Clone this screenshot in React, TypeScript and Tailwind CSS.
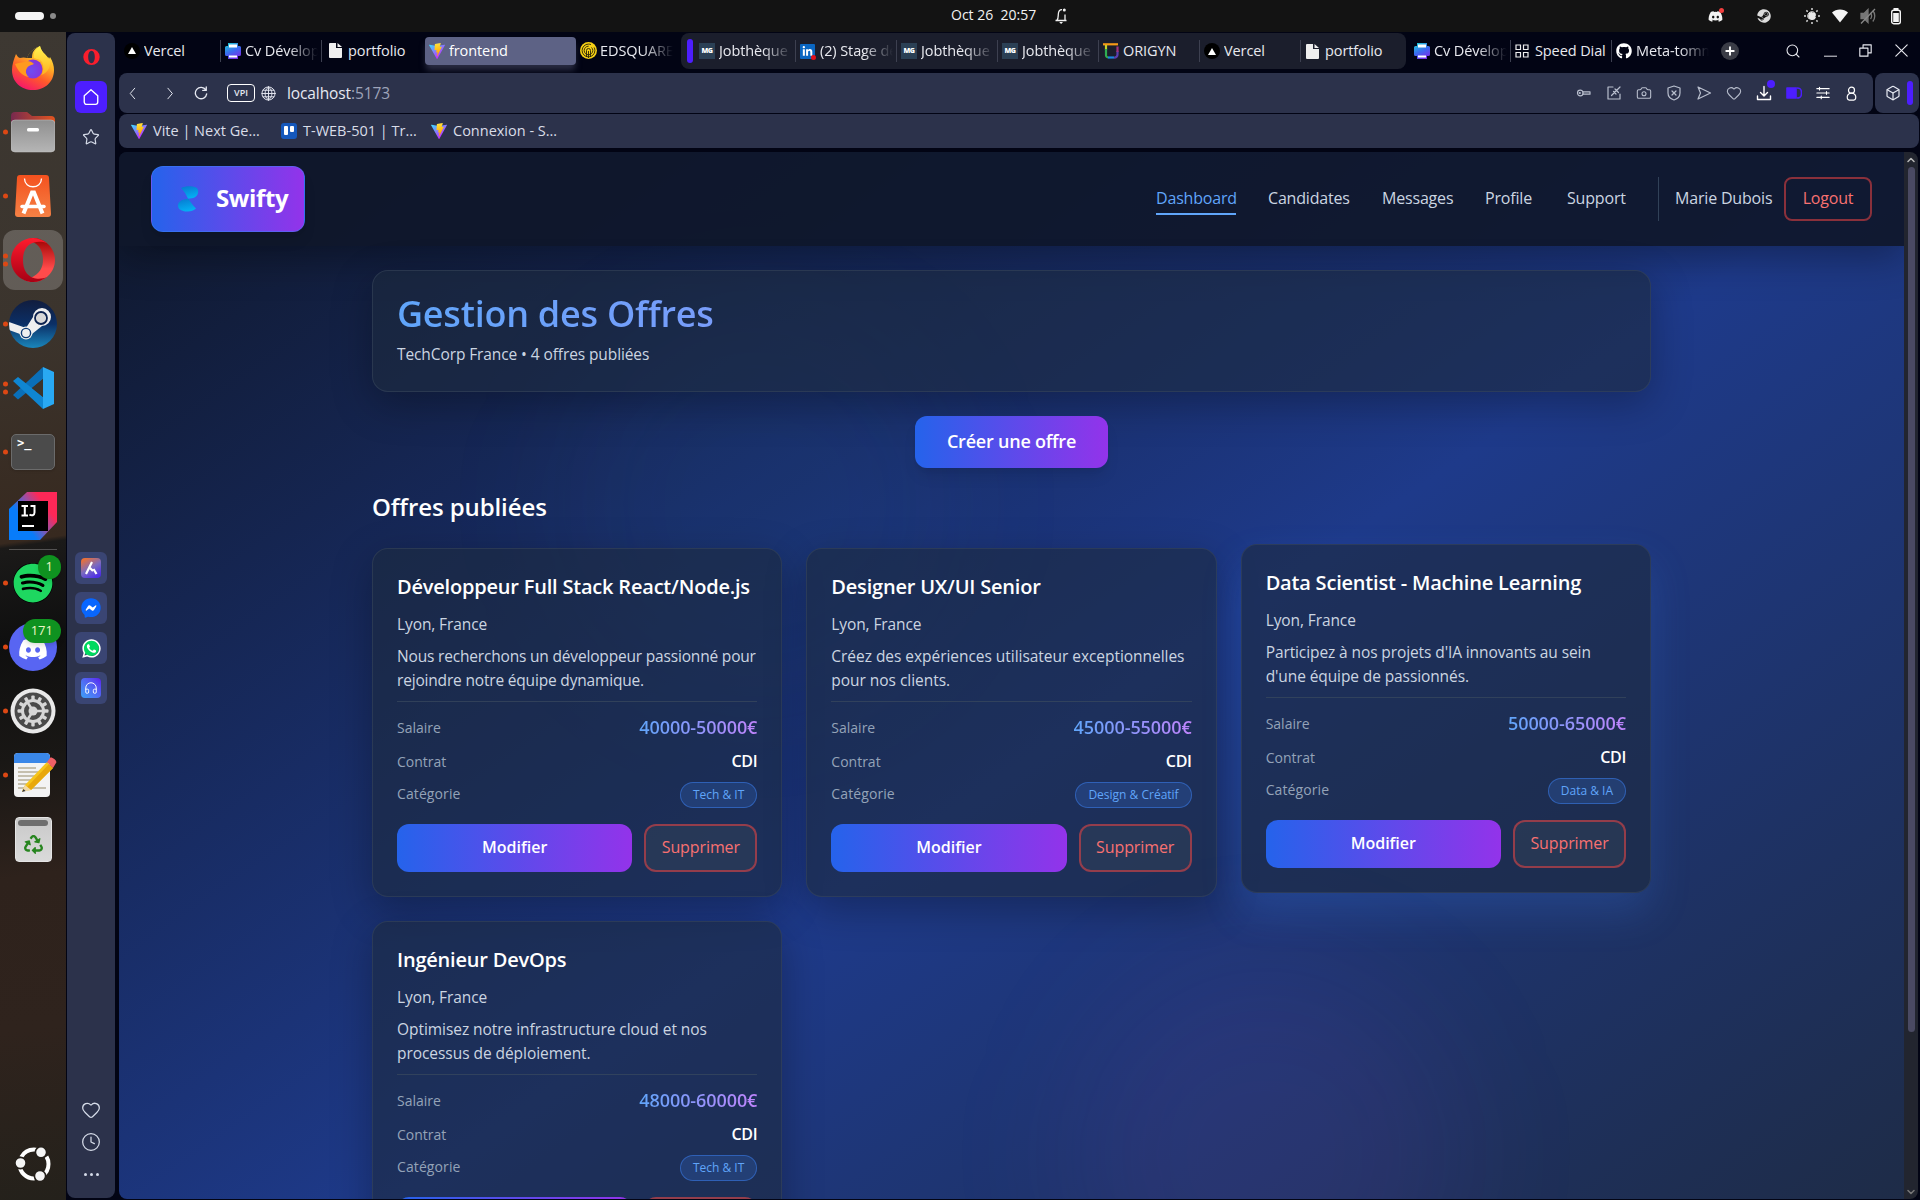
import React from 'react';
import { FaDiscord, FaFacebookMessenger, FaGithub, FaLinkedinIn, FaRecycle, FaSpotify, FaSteam, FaWhatsapp } from 'react-icons/fa';
import { Box, Camera, Clock, Headphones, Heart, Search, Star } from 'lucide-react';

/* ---------- shared glyphs ---------- */

function ViteLogo({ id, className }: { id: string; className?: string }) {
  return (
    <svg viewBox="0 0 256 257" className={className}>
      <defs>
        <linearGradient id={id + 'a'} x1="0" y1="0.1" x2="0.6" y2="0.85">
          <stop offset="0" stopColor="#41d1ff" />
          <stop offset="1" stopColor="#bd34fe" />
        </linearGradient>
        <linearGradient id={id + 'b'} x1="0.4" y1="0" x2="0.5" y2="0.8">
          <stop offset="0" stopColor="#ffea83" />
          <stop offset="0.1" stopColor="#ffdd35" />
          <stop offset="1" stopColor="#ffa800" />
        </linearGradient>
      </defs>
      <path fill={`url(#${id}a)`} d="M255.153 37.938L134.897 252.976c-2.483 4.44-8.862 4.466-11.382.048L.875 37.958c-2.746-4.814 1.371-10.646 6.827-9.67l120.385 21.517a6.537 6.537 0 0 0 2.322-.004l117.867-21.483c5.438-.991 9.574 4.796 6.877 9.62Z" />
      <path fill={`url(#${id}b)`} d="M185.432.063L96.44 17.501a3.268 3.268 0 0 0-2.634 3.014l-5.474 92.456a3.268 3.268 0 0 0 3.997 3.378l24.777-5.718c2.318-.535 4.413 1.507 3.936 3.838l-7.361 36.047c-.495 2.426 1.782 4.5 4.151 3.78l15.304-4.649c2.372-.72 4.652 1.36 4.15 3.788l-11.698 56.621c-.732 3.542 3.979 5.473 5.943 2.437l1.313-2.028l72.516-144.72c1.215-2.423-.88-5.186-3.54-4.672l-25.505 4.922c-2.396.462-4.435-1.77-3.759-4.114l16.646-57.705c.677-2.35-1.37-4.583-3.769-4.113Z" />
    </svg>
  );
}

function Stroke({ size = 16, w = 1.2, children }: { size?: number; w?: number; children: React.ReactNode }) {
  return (
    <svg width={size} height={size} viewBox="0 0 16 16" fill="none" stroke="currentColor" strokeWidth={w} strokeLinejoin="round" strokeLinecap="round" className="shrink-0">
      {children}
    </svg>
  );
}

/* ---------- system bar ---------- */

function SystemBar() {
  return (
    <div className="grid h-8 shrink-0 grid-cols-[951px_1fr_auto] items-center bg-[#131313] text-[#f2f2f2]">
      <div className="flex items-center gap-[6px] pl-[15px]">
        <span className="h-2 w-[29px] rounded-full bg-[#f5f5f5]" />
        <span className="size-[6px] rounded-full bg-[#8a8a8a]" />
      </div>
      <div className="flex items-center">
        <span className="w-[103px] pb-[2px] text-[14px] leading-5 whitespace-pre">Oct 26  20:57</span>
        <svg width="14" height="18" viewBox="0 0 14 18" fill="none" stroke="currentColor" strokeWidth="1.300">
          <path d="M1.500 13.500h11M3 13.300c1.300-1.500 1.200-3.500 1.300-6C4.400 4.500 5.500 2.700 8 2.700M11 13.300V7.500" />
          <circle cx="10.300" cy="3" r="1.500" fill="currentColor" stroke="none" />
          <path d="M5.200 15h3.800L7.100 17z" fill="currentColor" stroke="none" />
        </svg>
      </div>
      <div className="flex items-center pr-[18px]">
        <div className="relative mr-[34px]">
          <FaDiscord size={15} />
          <span className="absolute -top-[1px] -right-[1px] size-[5px] rounded-full bg-[#f23f3f]" />
        </div>
        <FaSteam size={14} className="mr-[33px] text-[#dcdcdc]" />
        <svg width="16" height="16" viewBox="0 0 16 16" className="mr-3">
          <g stroke="#d8d8d8" strokeWidth="1.500">
            <path d="M8 0v2M8 14v2M0 8h2M14 8h2M2.400 2.400l1.300 1.300M12.300 12.300l1.300 1.300M2.400 13.600l1.300-1.300M12.300 3.700l1.300-1.300" />
          </g>
          <circle cx="8" cy="8" r="4.300" fill="none" stroke="#d8d8d8" />
          <path d="M9.500 4.200A4 4 0 0 1 6.500 10.500 4.500 4.500 0 0 1 4.500 10 4.600 4.600 0 1 0 9.500 4.200z" fill="#131313" />
          <path d="M8 4a4 4 0 1 0 4 5A4.500 4.500 0 0 1 8 4z" fill="#e8e8e8" />
          <circle cx="9.300" cy="6.800" r="2.600" fill="#e8e8e8" />
        </svg>
        <svg width="16" height="14" viewBox="0 0 16 14" className="mr-3">
          <path d="M0 3.500C4-.500 12-.500 16 3.500L8 13.500z" fill="#f5f5f5" />
        </svg>
        <svg width="16" height="16" viewBox="0 0 16 16" className="mr-[14px]" stroke="#777" fill="none" strokeWidth="1.300">
          <path d="M1 5.500h3l4-4v13l-4-4H1z" fill="#777" />
          <path d="M10.500 5c1.300 1.700 1.300 4.300 0 6M12.800 2.500c2.600 3 2.600 8 0 11" />
          <path d="M15 1L1 15.500" stroke="#8a8a8a" />
        </svg>
        <svg width="12" height="17" viewBox="0 0 12 17">
          <rect x="3.500" y="0" width="5" height="2" fill="#f5f5f5" />
          <rect x="1.700" y="2.200" width="8.600" height="13.500" rx="2" fill="none" stroke="#f5f5f5" strokeWidth="1.400" />
          <rect x="3.200" y="5" width="5.600" height="9" fill="#f5f5f5" />
        </svg>
      </div>
    </div>
  );
}

/* ---------- dock ---------- */

function DockItem({ dots = 0, active, badge, children }: { dots?: number; active?: boolean; badge?: string; children: React.ReactNode }) {
  return (
    <div className="relative flex h-16 w-[66px] items-center justify-center">
      {active && <span className="absolute inset-x-[3px] inset-y-[2px] rounded-xl bg-white/20" />}
      <div className="absolute top-1/2 left-[3px] flex -translate-y-1/2 flex-col gap-[3px]">
        {dots > 0 && <span className="size-[5px] rounded-full bg-[#dd4814]" />}
        {dots > 1 && <span className="size-[5px] rounded-full bg-[#dd4814]" />}
      </div>
      <div className="relative">{children}</div>
      {badge && (
        <span className="absolute top-[4px] right-[5px] flex h-6 items-center rounded-full bg-[#0f9220] px-[8px] text-[13px] text-[#eef6c8] shadow-md">{badge}</span>
      )}
    </div>
  );
}

function Firefox() {
  return (
    <svg width="44" height="46" viewBox="0 0 44 46">
      <defs>
        <linearGradient id="ff1" x1="0.8" y1="0" x2="0.3" y2="1">
          <stop offset="0" stopColor="#fff44f" />
          <stop offset="0.35" stopColor="#ffb325" />
          <stop offset="0.65" stopColor="#ff5a2a" />
          <stop offset="1" stopColor="#f5156c" />
        </linearGradient>
        <radialGradient id="ff2" cx="0.4" cy="0.6" r="0.7">
          <stop offset="0" stopColor="#6f4df0" />
          <stop offset="1" stopColor="#8a2fd8" />
        </radialGradient>
        <linearGradient id="ff3" x1="0.5" y1="0" x2="0.5" y2="1">
          <stop offset="0" stopColor="#fff44f" />
          <stop offset="1" stopColor="#ffb01f" />
        </linearGradient>
      </defs>
      <path fill="url(#ff1)" d="M5 9c1 1.500 2 3.500 4 4 3-1 5-.600 7 0C19 5 25 3 29 1c1 6 6 8 9 13 1-1 1-2 1-2 3 5 4 9 4 13C43 37 34 45 22 45S1 37 1 25c0-6 2-11 4-16z" />
      <path fill="#3c3731" d="M16 13c2-6 6-9 13-12-6 3-8 6-8 12z" />
      <path fill="url(#ff3)" d="M29 1c-4 3-7 7-6 12 3 1 6 1 8 4 2 4 2 9-1 13 8-2 11-11 8-18-1 1-1 2-1 2C35 9 30 7 29 1z" />
      <circle cx="22" cy="24" r="9.500" fill="url(#ff2)" />
      <path fill="#ff9a1f" d="M4 19c5-2 9-1 12-3 3 0 5 1 7 3-2 1-5 1-7 4-2 3-1 7 2 9-7-1-11-6-14-13z" />
    </svg>
  );
}

function Files() {
  return (
    <svg width="44" height="42" viewBox="0 0 44 42">
      <defs>
        <linearGradient id="fi1" x1="0" x2="1"><stop offset="0" stopColor="#77294f" /><stop offset="1" stopColor="#e2541f" /></linearGradient>
        <linearGradient id="fi2" x1="0" y1="0" x2="0" y2="1"><stop offset="0" stopColor="#8f8f8f" /><stop offset="1" stopColor="#b5b5b5" /></linearGradient>
      </defs>
      <path d="M0 5a4 4 0 0 1 4-4h12l5 4h19a4 4 0 0 1 4 4v14H0z" fill="url(#fi1)" />
      <rect y="9" width="44" height="32" rx="4" fill="url(#fi2)" stroke="#c6c6c6" strokeWidth="0.500" />
      <rect x="16" y="17" width="12" height="3.500" rx="1.500" fill="#fff" />
    </svg>
  );
}

function AppCenter() {
  return (
    <svg width="36" height="42" viewBox="0 0 36 42">
      <defs><linearGradient id="ac" x1="0" y1="0" x2="0" y2="1"><stop offset="0" stopColor="#f4511e" /><stop offset="1" stopColor="#f58145" /></linearGradient></defs>
      <path d="M2 3a3 3 0 0 1 3-3h26a3 3 0 0 1 3 3l2 36a3 3 0 0 1-3 3H3a3 3 0 0 1-3-3z" fill="url(#ac)" />
      <path d="M9.500 3.500c0 11 17 11 17 0" fill="none" stroke="#fff" strokeWidth="1.300" />
      <path d="M8.500 38.500L17 17.500h2l8.500 21" fill="none" stroke="#fff" strokeWidth="4" />
      <path d="M7 31.500h22" fill="none" stroke="#fff" strokeWidth="3.500" strokeLinecap="round" />
    </svg>
  );
}

function OperaIcon() {
  return (
    <svg width="44" height="44" viewBox="0 0 44 44">
      <defs>
        <linearGradient id="op1" x1="0" y1="0" x2="0" y2="1"><stop offset="0" stopColor="#ff1b2d" /><stop offset="1" stopColor="#a70014" /></linearGradient>
        <linearGradient id="op2" x1="0" y1="0" x2="0" y2="1"><stop offset="0" stopColor="#9c0000" /><stop offset="0.700" stopColor="#ff4b4b" /></linearGradient>
      </defs>
      <path fill="url(#op2)" d="M22 0c12 0 22 10 22 22s-10 22-22 22c-5 0-9-2-12-4 4 3 22-1 22-18S18 1 14 4c3-3 5-4 8-4z" />
      <path fill="url(#op1)" fillRule="evenodd" d="M22 0C10 0 0 10 0 22s10 22 22 22c5 0 10-2 14-5-9 4-24 2-24-17S27 2 36 5C32 2 27 0 22 0z" />
    </svg>
  );
}

function SteamIcon() {
  return (
    <svg width="48" height="48" viewBox="0 0 48 48">
      <defs>
        <linearGradient id="st" x1="0" y1="0" x2="0" y2="1"><stop offset="0" stopColor="#111d3e" /><stop offset="0.500" stopColor="#0b2f66" /><stop offset="1" stopColor="#1a86bb" /></linearGradient>
        <clipPath id="stc"><circle cx="24" cy="24" r="24" /></clipPath>
      </defs>
      <circle cx="24" cy="24" r="24" fill="url(#st)" />
      <g clipPath="url(#stc)">
        <path d="M0 22l17 6 7-11a9 9 0 1 1 9 9l-10 8a6.500 6.500 0 0 1-12 0L0 30z" fill="#efefef" />
        <circle cx="17" cy="33" r="6.500" fill="#efefef" />
        <circle cx="17" cy="33" r="4.600" fill="none" stroke="#0d3a74" strokeWidth="1.400" />
        <circle cx="32" cy="18" r="6" fill="#d8d8d8" stroke="#0d2350" strokeWidth="1.800" />
      </g>
    </svg>
  );
}

function VsCode() {
  return (
    <svg width="42" height="42" viewBox="0 0 42 42">
      <path d="M1 28l5 4.500L31 12V0z" fill="#0a6fb8" />
      <path d="M1 14l5-4 25 20v12z" fill="#0f86d2" />
      <path d="M31 0l11 5v32l-11 5V0z" fill="#29a9f3" />
      <path d="M31 12L20 21l11 9z" fill="#3b332a" />
    </svg>
  );
}

function TerminalIcon() {
  return (
    <div className="flex h-9 w-11 rounded-[5px] border border-[#6b6b6b] bg-[#4b4b4b] shadow">
      <span className="pl-[5px] font-['DejaVu_Sans_Mono'] text-[12px] leading-[16px] font-bold text-white">&gt;_</span>
    </div>
  );
}

function IntelliJ() {
  return (
    <svg width="48" height="48" viewBox="0 0 48 48">
      <defs>
        <linearGradient id="ij" x1="0.050" y1="0.800" x2="0.900" y2="0.200"><stop offset="0.300" stopColor="#087cfa" /><stop offset="0.600" stopColor="#9a4fa5" /><stop offset="0.850" stopColor="#fe2857" /></linearGradient>
      </defs>
      <path d="M0 17L18 0h30v30L31 48H0z" fill="url(#ij)" />
      <rect x="9" y="9" width="30" height="30" fill="#000" />
      <path d="M12.500 14h6.500M12.500 23.500h6.500M15.800 14v9.500M21.500 14h5M25.500 14v6.500c0 3-3 3.500-5 2" stroke="#fff" strokeWidth="2" fill="none" />
      <path d="M13 34h12" stroke="#fff" strokeWidth="2" />
    </svg>
  );
}

function Settings() {
  const teeth = Array.from({ length: 12 }, (_, i) => i * 30);
  return (
    <svg width="46" height="46" viewBox="0 0 46 46">
      <circle cx="23" cy="23" r="22.500" fill="#e9e9e9" />
      <circle cx="23" cy="23" r="18.500" fill="#4a4a4a" />
      {teeth.map((a) => (
        <rect key={a} x="21.300" y="7.500" width="3.400" height="6" rx="1" fill="#d6d6d6" transform={`rotate(${a} 23 23)`} />
      ))}
      <circle cx="23" cy="23" r="10.500" fill="none" stroke="#d6d6d6" strokeWidth="3" />
      <circle cx="23" cy="23" r="4.500" fill="#d6d6d6" />
      <path d="M23 23h11M23 23l-6-9.500M23 23l-6 9.500" stroke="#d6d6d6" strokeWidth="2.500" />
    </svg>
  );
}

function TextEditor() {
  return (
    <svg width="44" height="46" viewBox="0 0 44 46" className="ml-1">
      <rect x="1" y="1" width="36" height="44" rx="4" fill="#f3f3f3" />
      <path d="M1 11V5a4 4 0 0 1 4-4h28a4 4 0 0 1 4 4v6z" fill="#3a87e8" />
      <path d="M5 16h18M5 20h20M5 24h18M5 28h14M5 32h12M5 36h28" stroke="#c5bfae" strokeWidth="2" />
      <path d="M12 33L34 10l6 6-22 22-9 1z" fill="#f6c51c" />
      <path d="M14 35L36 12l4 4-22 22z" fill="#e8a80c" />
      <path d="M12 33l6 5-9 2z" fill="#f0d9a8" />
      <path d="M9 40l1.500-3 2 2z" fill="#333" />
      <path d="M34 10l3-4c1-2 8 3 6 5l-3 5z" fill="#ef5f66" />
    </svg>
  );
}

function Trash() {
  return (
    <div className="flex h-[45px] w-[37px] flex-col items-center rounded-[4px] border border-[#e5e5e5] bg-gradient-to-b from-[#c9c9c9] to-[#dadada] pt-[2px]">
      <span className="mb-[9px] h-[6px] w-[30px] rounded bg-[#6f6f6f]" />
      <FaRecycle size={19} className="text-[#27851f]" />
    </div>
  );
}

function UbuntuLogo() {
  return (
    <svg width="36" height="36" viewBox="0 0 36 36" fill="none" stroke="#fff" strokeWidth="4">
      <circle cx="19" cy="18" r="14.500" strokeDasharray="22.400 8" strokeDashoffset="-22" />
      <g stroke="#25201b" strokeWidth="1.600" fill="#f5f5f5">
        <circle cx="5.500" cy="17" r="5.600" />
        <circle cx="26" cy="6.300" r="5.600" />
        <circle cx="25" cy="30" r="5.600" />
      </g>
    </svg>
  );
}

function Dock() {
  return (
    <div className="flex w-[66px] shrink-0 flex-col bg-[linear-gradient(172deg,#3d3832_0%,#3b342d_25%,#37291f_43.500%,#1b1a19_43.900%,#0f0f0f_52%,#191715_62%,#2e221c_72%,#2f231d_85%,#24211b_100%)] pt-1">
      <DockItem><Firefox /></DockItem>
      <DockItem dots={1}><Files /></DockItem>
      <DockItem dots={1}><AppCenter /></DockItem>
      <DockItem dots={2} active><OperaIcon /></DockItem>
      <DockItem dots={1}><SteamIcon /></DockItem>
      <DockItem dots={2}><VsCode /></DockItem>
      <DockItem dots={1}><TerminalIcon /></DockItem>
      <DockItem><IntelliJ /></DockItem>
      <div className="mx-[9px] mt-px mb-[1px] h-px bg-white/25" />
      <DockItem dots={1} badge="1"><div className="size-10 rounded-full bg-black"><FaSpotify size={40} className="text-[#1ed760]" /></div></DockItem>
      <DockItem dots={1} badge="171">
        <div className="flex size-12 items-center justify-center rounded-full bg-[#5865f2]"><FaDiscord size={30} className="mt-1 text-white" /></div>
      </DockItem>
      <DockItem dots={1}><Settings /></DockItem>
      <DockItem dots={1}><TextEditor /></DockItem>
      <DockItem><Trash /></DockItem>
      <div className="mt-auto mb-[18px] flex justify-center"><UbuntuLogo /></div>
    </div>
  );
}

/* ---------- browser sidebar ---------- */

function AppTile({ children }: { children: React.ReactNode }) {
  return <div className="flex size-8 items-center justify-center rounded-md bg-[#3a4573]">{children}</div>;
}

function Sidebar() {
  return (
    <div className="mt-px mb-[2px] ml-px flex w-12 shrink-0 flex-col items-center rounded-lg bg-[#2c324b] text-[#d5dbe8]">
      <div className="mt-4 h-4">
        <svg width="17" height="16" viewBox="0 0 17 16"><path fillRule="evenodd" fill="#fa1e2d" d="M8.500 0a8.200 8 0 1 0 0 16 8.200 8 0 1 0 0-16zm0 1.800c2 0 3.300 2.800 3.300 6.200s-1.300 6.200-3.300 6.200S5.200 11.400 5.200 8 6.500 1.800 8.500 1.800z" /></svg>
      </div>
      <div className="mt-4 flex size-8 items-center justify-center rounded-md bg-[#4d1eff] text-white">
        <Stroke size={18}><path d="M2 6.800L8 1.500l6 5.300v5.700a2 2 0 0 1-2 2H4a2 2 0 0 1-2-2z" /></Stroke>
      </div>
      <Star size={18} strokeWidth={1.600} className="mt-[15px]" />
      <div className="mt-[406px] flex flex-col gap-2">
        <AppTile>
          <div className="flex size-5 items-center justify-center rounded bg-[linear-gradient(150deg,#e8703a_10%,#7a6bc0_50%,#4d2ce8_90%)]">
            <svg width="14" height="14" viewBox="0 0 14 14" stroke="#fff" strokeWidth="2.200" fill="none"><path d="M2 13L8 1M6 7l3 3M9.500 8l3 5" /></svg>
          </div>
        </AppTile>
        <AppTile>
          <div className="relative flex size-5 items-center justify-center">
            <span className="absolute inset-[4px] rounded-full bg-white" />
            <FaFacebookMessenger size={20} className="relative text-[#0866ff]" />
          </div>
        </AppTile>
        <AppTile>
          <div className="relative flex size-5 items-center justify-center">
            <span className="absolute inset-[2px] rounded-full bg-[#00d95f]" />
            <FaWhatsapp size={21} className="relative shrink-0 text-white" />
          </div>
        </AppTile>
        <AppTile>
          <div className="flex size-5 items-center justify-center rounded bg-gradient-to-tr from-[#3aa0f5] to-[#5a14f0] text-white"><Headphones size={14} strokeWidth={1.600} /></div>
        </AppTile>
      </div>
      <div className="mt-auto flex flex-col items-center">
        <Heart size={20} strokeWidth={1.500} />
        <Clock size={20} strokeWidth={1.500} className="mt-3" />
        <div className="mt-[21px] mb-[22px] flex gap-[3px]">
          <span className="size-[3px] rounded-full bg-[#d5dbe8]" />
          <span className="size-[3px] rounded-full bg-[#d5dbe8]" />
          <span className="size-[3px] rounded-full bg-[#d5dbe8]" />
        </div>
      </div>
    </div>
  );
}

/* ---------- tabs ---------- */

const vercelIcon = (
  <span className="flex size-4 items-center justify-center rounded-full bg-black">
    <svg width="8" height="7" viewBox="0 0 8 7"><path d="M4 0l4 7H0z" fill="#fff" /></svg>
  </span>
);
const cvIcon = (
  <svg width="16" height="16" viewBox="0 0 16 16">
    <defs><linearGradient id="cv" x1="0.200" y1="0" x2="0.700" y2="1"><stop offset="0" stopColor="#1ec9d6" /><stop offset="0.500" stopColor="#3a6bf0" /><stop offset="1" stopColor="#7d2be8" /></linearGradient></defs>
    <path d="M3 0h10v3h1.500A1.500 1.500 0 0 1 16 4.500v7a1.500 1.500 0 0 1-1.500 1.500H13v3H3v-3H1.500A1.500 1.500 0 0 1 0 11.500v-7A1.500 1.500 0 0 1 1.500 3H3z" fill="url(#cv)" />
    <path d="M4 1.500h8v3H4zM4 12.500h8v2H4z" fill="#fff" />
  </svg>
);
const docIcon = (
  <svg width="13" height="15" viewBox="0 0 13 15" className="ml-px"><path d="M1 0h6v5h6v9a1 1 0 0 1-1 1H1a1 1 0 0 1-1-1V1a1 1 0 0 1 1-1zM8.500 0L13 4H8.500z" fill="#efefef" /></svg>
);
const mgIcon = (
  <span className="flex size-4 items-center justify-center bg-[#2b4055] text-[7px] font-extrabold tracking-tighter text-white">MG</span>
);
const edIcon = (
  <svg width="17" height="17" viewBox="0 0 17 17">
    <circle cx="8.500" cy="8.500" r="8.500" fill="#f5cf15" />
    <g fill="none" stroke="#2a2508" strokeWidth="0.900">
      <circle cx="8.500" cy="8.500" r="6.400" strokeDasharray="32 4" />
      <circle cx="8.500" cy="8.500" r="4.300" strokeDasharray="20 3" />
      <path d="M6.500 15V8.500a2 2 0 0 1 4 0V15M8.500 9v7" />
    </g>
  </svg>
);
const linkedinIcon = (
  <span className="relative flex size-[15px] items-center justify-center rounded-[1px] bg-[#0a66c2]">
    <FaLinkedinIn size={11} className="text-white" />
    <span className="absolute -right-px -bottom-px size-[5px] rounded-full bg-[#e0101a]" />
  </span>
);
const origynIcon = (
  <svg width="16" height="16" viewBox="0 0 16 16" fill="none" strokeWidth="2.200">
    <path d="M0 1.300h15" stroke="#f59a16" />
    <path d="M3 2v5" stroke="#c9d22a" />
    <path d="M3 6v6a2 2 0 0 0 2 2.300" stroke="#2fae52" />
    <path d="M5 14.500h6" stroke="#1b86e0" />
    <path d="M11 14.500a3 3 0 0 0 3.500-3V8" stroke="#5a3fb0" />
    <path d="M14.500 9V3.500" stroke="#a0327e" />
  </svg>
);
const dialIcon = (
  <svg width="14" height="14" viewBox="0 0 14 14" fill="none" stroke="#eee" strokeWidth="1.200">
    <path d="M1 1h4.500v4.500H1zM8.500 1H13v4.500H8.500zM1 8.500h4.500V13H1zM8.500 8.500H13V13H8.500z" />
  </svg>
);

function Tab({ icon, label, sep = true, active, fade }: { icon: React.ReactNode; label: string; sep?: boolean; active?: boolean; fade?: boolean }) {
  return (
    <div
      className={
        active
          ? 'flex h-7 w-[151px] shrink-0 items-center rounded-[4px] bg-[#5d6285] pl-1 text-white shadow-[0_6px_6px_-1px_rgba(70,73,100,0.6)]'
          : 'flex h-[22px] w-[101px] shrink-0 items-center pl-1 text-[#e8e9ef] ' + (sep ? 'border-r border-[#3d4050]' : '')
      }
    >
      <span className="flex w-5 shrink-0">{icon}</span>
      <span
        className={
          'w-[73px] overflow-hidden text-[14.500px] leading-[22px] tracking-[-0.100px] whitespace-nowrap ' +
          (fade ? '[mask-image:linear-gradient(90deg,#000_60%,transparent_100%)]' : '')
        }
      >
        {label}
      </span>
    </div>
  );
}

function TabBar() {
  return (
    <div className="flex h-[41px] shrink-0 pr-[12px] pl-px">
      <div className="flex h-[37px] items-center">
        <Tab icon={vercelIcon} label="Vercel" />
        <Tab icon={cvIcon} label="Cv Dévelop" fade />
        <span className="w-[2px]" />
        <Tab icon={docIcon} label="portfolio" sep={false} />
        <Tab icon={<ViteLogo id="t" className="size-4" />} label="frontend" active />
        <Tab icon={edIcon} label="EDSQUARE" sep={false} fade />
      </div>
      <div className="mt-px ml-[4px] flex h-9 w-[725px] shrink-0 items-center rounded-lg bg-[#1b1e2c]">
        <span className="mr-[2px] ml-[6px] h-6 w-[6px] shrink-0 rounded-full bg-[#4d1eff]" />
        <Tab icon={mgIcon} label="Jobthèque" fade />
        <Tab icon={linkedinIcon} label="(2) Stage de" fade />
        <Tab icon={mgIcon} label="Jobthèque" fade />
        <Tab icon={mgIcon} label="Jobthèque" fade />
        <Tab icon={origynIcon} label="ORIGYN" />
        <Tab icon={vercelIcon} label="Vercel" />
        <Tab icon={docIcon} label="portfolio" sep={false} />
      </div>
      <div className="ml-1 flex h-[37px] items-center">
        <Tab icon={cvIcon} label="Cv Dévelop" fade />
        <Tab icon={dialIcon} label="Speed Dial" />
        <Tab icon={<FaGithub size={16} className="text-white" />} label="Meta-tomm" sep={false} fade />
        <span className="ml-2 flex size-[18px] items-center justify-center rounded-full bg-[#3a3c46] text-white">
          <Stroke size={10} w={3}><path d="M8 2v12M2 8h12" /></Stroke>
        </span>
      </div>
      <div className="ml-auto flex h-[37px] w-[123px] items-center justify-between text-[#e8e9ef]">
        <Search size={16} strokeWidth={1.600} />
        <Stroke size={13}><path d="M0 15h16" /></Stroke>
        <Stroke size={13} w={1.400}><path d="M1 5h10v10H1zM5 5V1h10v10h-4" /></Stroke>
        <Stroke size={13} w={1.400}><path d="M1 1l14 14M15 1L1 15" /></Stroke>
      </div>
    </div>
  );
}

/* ---------- toolbar ---------- */

function AddressBar() {
  return (
    <div className="flex h-10 shrink-0 gap-[2px] pr-px text-[#e6e9f2]">
      <div className="flex flex-1 items-center rounded-lg bg-[#2c324b] pr-[14px] pl-[8px]">
        <Stroke size={13}><path d="M9.500 1.500L4 8l5.500 6.500" /></Stroke>
        <span className="w-[23px]" />
        <Stroke size={13}><path d="M6 1.500L11.500 8 6 14.500" /></Stroke>
        <span className="w-[18px]" />
        <Stroke size={14} w={1.500}><path d="M13.500 4.500A6.500 6.500 0 1 0 14.500 9M14 1v4h-4" /></Stroke>
        <span className="ml-[19px] flex h-[18px] w-7 items-center justify-center overflow-hidden rounded border border-white text-[9px] font-semibold">VPI</span>
        <span className="w-[6px]" />
        <Stroke size={15} w={1}>
          <circle cx="8" cy="8" r="7" />
          <path d="M1 8h14M8 1v14M8 1c-5 4-5 10 0 14M8 1c5 4 5 10 0 14M2.200 4.500h11.600M2.200 11.500h11.600" />
        </Stroke>
        <span className="ml-[11px] pt-px text-[15.500px] tracking-[-0.100px]">
          localhost<span className="text-[#9ea4ba]">:5173</span>
        </span>
        <div className="ml-auto flex items-center gap-[14px] text-[#b9bfce]">
          <Stroke><path d="M6.500 6.800H14M6.500 9.200H11M14 6.800v2.400h-3" /><circle cx="4.300" cy="8" r="2.800" /><circle cx="3.800" cy="8" r=".5" /></Stroke>
          <Stroke><path d="M7 2H2v12h12V9M5.500 10.500L14 2M9 4l3.500 3.500M7.500 6.500L10 9" /></Stroke>
          <Camera size={16} strokeWidth={1.600} />
          <Stroke><path d="M8 1l6 2v5c0 3.500-3 6-6 7-3-1-6-3.500-6-7V3zM6 6l4 4M10 6l-4 4" /></Stroke>
          <Stroke><path d="M2 2l12.500 6L2 14l2.500-6z" /></Stroke>
          <Heart size={16} strokeWidth={1.600} />
          <div className="relative text-white">
            <Stroke w={1.400}><path d="M8 1.500v9M4.500 7.500L8 11l3.500-3.500M1.500 11v3.500h13V11" /></Stroke>
            <span className="absolute -top-[5px] -right-[3px] size-2 rounded-full bg-[#4d1eff]" />
          </div>
          <span className="flex w-4 text-[#4d1eff]">
            <Stroke w={1.600}><path d="M1 3h9v10H1z" fill="currentColor" /><path d="M11 3c4 0 4.500 2 4.500 5s-.500 5-4.500 5" /></Stroke>
          </span>
          <span className="flex text-white"><Stroke size={14} w={1.300}><path d="M1 3h14M1 8h14M1 13h14M4 1.500v3M12 6.500v3M6 11.500v3" /></Stroke></span>
          <span className="flex text-white"><Stroke size={15} w={1.300}><circle cx="8" cy="4.500" r="3.200" /><path d="M8 7.700c-3.200 0-5 2.400-4.500 5.300.200 1.300 1 2 2 2h5c1 0 1.800-.700 2-2 .500-2.900-1.300-5.300-4.500-5.300z" /></Stroke></span>
        </div>
      </div>
      <div className="flex w-[44px] items-center justify-between rounded-lg bg-[#2c324b] pr-[6px] pl-[10px]">
        <Box size={16} strokeWidth={1.800} />
        <span className="h-6 w-[6px] rounded-full bg-[#4d1eff]" />
      </div>
    </div>
  );
}

function BookmarksBar() {
  return (
    <div className="mt-px mr-px flex h-[34px] shrink-0 items-center rounded-lg bg-[#2c324b] pl-3 text-[14.500px] whitespace-nowrap text-[#d9dde8]">
      <div className="flex w-[150px] items-center gap-[6px]"><ViteLogo id="b1" className="size-4 shrink-0" />Vite | Next Ge…</div>
      <div className="flex w-[150px] items-center gap-[6px]">
        <span className="flex size-4 shrink-0 justify-center gap-[2px] rounded-[3px] bg-[#1558bc] pt-[3px]">
          <span className="h-[9px] w-1 rounded-[1px] bg-white" />
          <span className="h-[6px] w-1 rounded-[1px] bg-white" />
        </span>
        <span>T-WEB-501 | Tr…</span>
      </div>
      <div className="flex items-center gap-[6px]"><ViteLogo id="b2" className="size-4 shrink-0" />Connexion - S…</div>
    </div>
  );
}

/* ---------- application ---------- */

type Offer = { title: string; desc: string[]; salary: string; category: string; tracking: string; hovered?: boolean };

const offers: Offer[] = [
  { title: 'Développeur Full Stack React/Node.js', desc: ['Nous recherchons un développeur passionné pour', 'rejoindre notre équipe dynamique.'], salary: '40000-50000€', category: 'Tech & IT', tracking: 'tracking-[-0.180px]' },
  { title: 'Designer UX/UI Senior', desc: ['Créez des expériences utilisateur exceptionnelles', 'pour nos clients.'], salary: '45000-55000€', category: 'Design & Créatif', tracking: 'tracking-[-0.040px]' },
  { title: 'Data Scientist - Machine Learning', desc: ["Participez à nos projets d'IA innovants au sein", "d'une équipe de passionnés."], salary: '50000-65000€', category: 'Data & IA', tracking: 'tracking-[-0.100px]', hovered: true },
  { title: 'Ingénieur DevOps', desc: ['Optimisez notre infrastructure cloud et nos', 'processus de déploiement.'], salary: '48000-60000€', category: 'Tech & IT', tracking: 'tracking-[-0.050px]' },
];

function OfferCard({ offer }: { offer: Offer }) {
  return (
    <div
      className={
        'flex h-[349px] flex-col rounded-2xl border border-[#3b4a5e]/50 bg-slate-800/60 px-6 pt-6 ' +
        (offer.hovered ? '-translate-y-1 shadow-[0_20px_40px_rgba(59,130,246,0.2)]' : 'shadow-[0_12px_40px_rgba(0,0,0,0.28)]')
      }
    >
      <h3 className="text-[20px] leading-7 font-semibold tracking-[-0.200px] whitespace-nowrap text-white">{offer.title}</h3>
      <p className="mt-[11px] text-[15.500px] leading-6 tracking-[-0.100px] text-[#cbd5e1]">Lyon, France</p>
      <div className={'mt-2 text-[15.500px] leading-6 whitespace-nowrap text-[#cbd5e1] ' + offer.tracking}>
        {offer.desc.map((l) => <p key={l}>{l}</p>)}
      </div>
      <div className="mt-[9px] border-t border-[#3b4a5e]/70 pt-[11px] text-[14px] font-medium text-[#94a3b8]">
        <div className="flex h-7 items-center justify-between">
          <span>Salaire</span>
          <span className="bg-[linear-gradient(90deg,#60a5fa,#c084fc)] bg-clip-text text-[18px] leading-7 font-semibold tracking-[-0.080px] text-transparent">{offer.salary}</span>
        </div>
        <div className="mt-2 flex h-6 items-center justify-between">
          <span>Contrat</span>
          <span className="text-[16px] font-semibold tracking-[-0.300px] text-white">CDI</span>
        </div>
        <div className="mt-[9px] flex h-[26px] items-center justify-between">
          <span className="pb-[3px] tracking-[0.100px]">Catégorie</span>
          <span className="flex h-[26px] items-center rounded-full border border-[#3b82f6]/50 bg-[#3b82f6]/20 px-3 text-[12px] text-[#60a5fa]">{offer.category}</span>
        </div>
      </div>
      <div className="mt-4 flex gap-3">
        <button className="h-12 flex-1 rounded-xl bg-[linear-gradient(90deg,#2563eb,#9333ea)] pb-[2px] text-[16px] font-semibold text-white">Modifier</button>
        <button className="h-12 w-[113px] rounded-xl border-2 border-[#ef4444]/55 bg-slate-700/50 pb-[2px] text-[16px] font-medium tracking-[-0.100px] text-[#f87171]">Supprimer</button>
      </div>
    </div>
  );
}

function Header() {
  return (
    <header className="relative flex h-[94px] shrink-0 items-center bg-[#0f172a]/92 pr-8 pl-8 text-[16px] font-medium tracking-[-0.180px] text-[#cbd5e1] shadow-[0_10px_40px_rgba(0,0,0,0.35)]">
      <div className="flex h-[66px] w-[154px] items-center rounded-xl border border-[#3b82f6]/50 bg-[linear-gradient(90deg,#2563eb,#9333ea)] shadow-lg">
        <svg width="22" height="26" viewBox="0 0 22 26" className="ml-[25px]">
          <defs><linearGradient id="sw" x1="0" y1="0" x2="0.300" y2="1"><stop offset="0" stopColor="#0878d0" /><stop offset="1" stopColor="#04aef2" /></linearGradient></defs>
          <path d="M4 2C8 0 16-.500 20 2c3 4 0 10-5 10.300l-4 .400C9.500 9 7 5 4 2z" fill="url(#sw)" />
          <path d="M11.500 12.700c-5 .300-10 1.800-10.500 6.300s5 7 10 6.500c3-.300 6-1 8-3-3-3-5-6-7.500-9.800z" fill="url(#sw)" />
        </svg>
        <span className="ml-[17px] pb-[3px] text-[24px] font-bold tracking-[-0.350px] text-white">Swifty</span>
      </div>
      <nav className="mb-[2px] ml-auto flex items-center">
        <a className="mt-[5px] w-20 border-b-2 border-[#60a5fa] pb-[3px] text-[#60a5fa]">Dashboard</a>
        <a className="ml-8 w-[82px]">Candidates</a>
        <a className="ml-8 w-[72px]">Messages</a>
        <a className="ml-[31px] w-[50px]">Profile</a>
        <a className="ml-8 w-[60px]">Support</a>
      </nav>
      <span className="ml-[31px] h-[44px] w-px bg-slate-700" />
      <span className="ml-4 w-[97px] pb-[2px] whitespace-nowrap">Marie Dubois</span>
      <button className="ml-3 h-[44px] w-[88px] rounded-lg border-2 border-[#ef4444]/55 pb-[3px] text-[#f87171]">Logout</button>
    </header>
  );
}

function Page() {
  return (
    <div className="mt-1 mr-[2px] mb-[1px] flex flex-1 overflow-hidden rounded-lg">
      <div className="relative h-[1047px] flex-1 overflow-hidden bg-[linear-gradient(to_bottom_right,#0f172a,#1e3a8a,#1e293b)] bg-[length:100%_1236px]">
        <span className="absolute top-[160px] left-[446px] size-[384px] rounded-full bg-[#3b82f6]/6 blur-3xl" />
        <span className="absolute top-[810px] left-[955px] size-[384px] rounded-full bg-[#a855f7]/8 blur-3xl" />
        <Header />
        <main className="relative ml-[253px] w-[1279px] pt-6">
          <section className="h-[122px] rounded-2xl border border-[#3b4a5e]/50 bg-slate-800/60 px-6 pt-5 shadow-[0_12px_40px_rgba(0,0,0,0.28)]">
            <h1 className="bg-[linear-gradient(90deg,#60a5fa,#c084fc)] bg-clip-text text-[36px] leading-[45px] font-semibold tracking-[-0.250px] text-transparent">Gestion des Offres</h1>
            <p className="mt-[6px] text-[15.500px] leading-6 tracking-[-0.100px] text-[#cbd5e1]">TechCorp France • 4 offres publiées</p>
          </section>
          <div className="mt-6 flex justify-center">
            <button className="h-[52px] w-[193px] rounded-xl bg-[linear-gradient(90deg,#2563eb,#9333ea)] pb-[2px] text-[18px] font-semibold tracking-[-0.220px] text-white shadow-lg">Créer une offre</button>
          </div>
          <h2 className="mt-[23px] h-8 text-[24px] leading-8 font-semibold tracking-[-0.100px] text-white">Offres publiées</h2>
          <div className="mt-[25px] grid grid-cols-3 gap-6">
            {offers.map((o) => <OfferCard key={o.title} offer={o} />)}
          </div>
        </main>
      </div>
      <div className="flex h-[1047px] w-[14px] shrink-0 flex-col items-center bg-[#22252f] text-[#b8b8b8]">
        <span className="flex h-[15px] items-center"><Stroke size={8} w={3}><path d="M2 11l6-6 6 6" /></Stroke></span>
        <span className="h-[865px] w-[7px] rounded-full bg-[#4a4a63]" />
        <span className="mt-auto mb-[3px] text-[#777]"><Stroke size={8} w={3}><path d="M2 5l6 6 6-6" /></Stroke></span>
      </div>
    </div>
  );
}

export default function App() {
  return (
    <div className="flex h-[1200px] w-[1920px] flex-col overflow-hidden bg-[#020414] font-['Open_Sans','Noto_Sans',sans-serif]">
      <SystemBar />
      <div className="flex min-h-0 flex-1">
        <Dock />
        <Sidebar />
        <div className="ml-1 flex min-w-0 flex-1 flex-col">
          <TabBar />
          <AddressBar />
          <BookmarksBar />
          <Page />
        </div>
      </div>
    </div>
  );
}
